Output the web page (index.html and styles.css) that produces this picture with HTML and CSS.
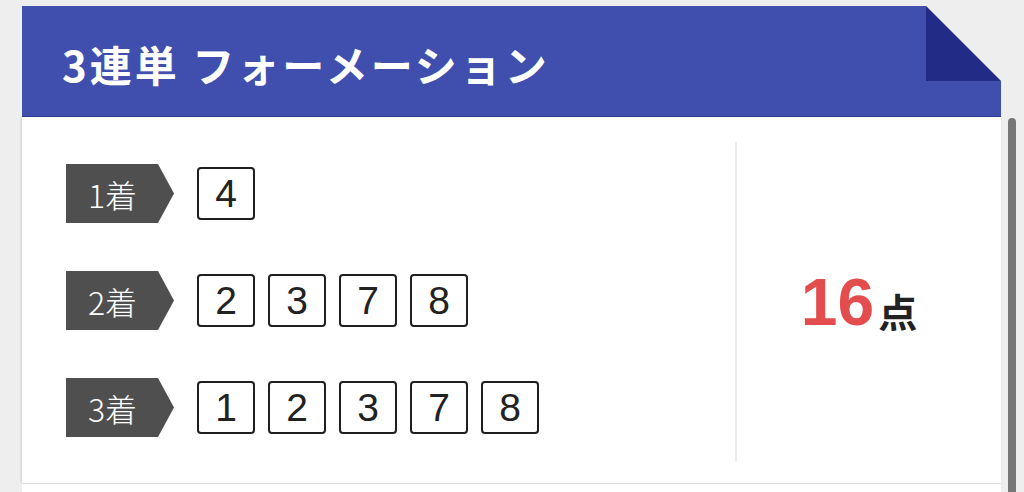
FILE: index.html
```html
<!DOCTYPE html>
<html lang="ja">
<head>
  <meta charset="UTF-8">
  <meta name="viewport" content="width=device-width, initial-scale=1.0">
  <title>3連単 フォーメーション</title>
  <link rel="stylesheet" href="styles.css">
</head>
<body>

<div class="card">
  <div class="card-head">
    <h2>3連単 フォーメーション</h2>
    <span class="fold"></span>
  </div>

  <div class="card-body">
    <div class="picks">
      <div class="pick-row">
        <span class="place">1着</span>
        <ul class="nums">
          <li>4</li>
        </ul>
      </div>
      <div class="pick-row">
        <span class="place">2着</span>
        <ul class="nums">
          <li>2</li><li>3</li><li>7</li><li>8</li>
        </ul>
      </div>
      <div class="pick-row">
        <span class="place">3着</span>
        <ul class="nums">
          <li>1</li><li>2</li><li>3</li><li>7</li><li>8</li>
        </ul>
      </div>
    </div>

    <div class="total">
      <span class="count">16</span><span class="unit">点</span>
    </div>
  </div>

  <div class="card-foot"></div>
</div>

<div class="scrollbar"></div>

</body>
</html>
```

FILE: styles.css
```css
body {
    margin: 0;
    padding: 6px 0 0 22px;
    background-color: #eeeeee;
    font-family: 'Noto Sans CJK JP', 'Noto Sans', sans-serif;
    color: #222;
    overflow: hidden;
}
.card {
    width: 979px;
}

/* header with the folded top-right corner */
.card-head {
    position: relative;
    height: 111px;
    display: flex;
    align-items: center;
    padding: 4px 0 0 40px;
    box-sizing: border-box;
    background-color: #404fae;
    border-bottom: 1px solid #2b3894;
    clip-path: polygon(0 0, calc(100% - 75px) 0, 100% 75px, 100% 100%, 0 100%);
}
.card-head h2 {
    margin: 0;
    color: #fff;
    font-size: 42px;
    font-weight: 700;
    letter-spacing: 3px;
}
.fold {
    position: absolute;
    top: 0;
    right: 0;
    width: 75px;
    height: 75px;
    background-color: #222c86;
    clip-path: polygon(0 0, 0 100%, 100% 100%);
}

.card-body {
    display: flex;
    background-color: #fff;
    box-shadow: -1px 0 2px rgba(0, 0, 0, 0.12);
}
.picks {
    width: 713px;
    box-sizing: border-box;
    padding: 47px 0 46px 44px;
    display: flex;
    flex-direction: column;
    gap: 48px;
}
.pick-row {
    display: flex;
    align-items: center;
    gap: 23px;
}
.place {
    width: 108px;
    height: 59px;
    box-sizing: border-box;
    padding-left: 22px;
    display: flex;
    align-items: center;
    background-color: #4f4f4f;
    color: #fff;
    font-size: 32px;
    font-weight: 300;
    clip-path: polygon(0 0, calc(100% - 16px) 0, 100% 50%, calc(100% - 16px) 100%, 0 100%);
}
.nums {
    list-style: none;
    margin: 0;
    padding: 0;
    display: flex;
    gap: 13px;
}
.nums li {
    width: 58px;
    height: 53px;
    box-sizing: border-box;
    border: 2px solid #1f1f1f;
    border-radius: 4px;
    display: flex;
    align-items: center;
    justify-content: center;
    font-family: 'Liberation Sans', Arial, sans-serif;
    font-size: 39px;
    line-height: 1;
    color: #222;
}

.total {
    flex: 1;
    margin: 25px 0 22px;
    border-left: 2px solid #ececec;
    display: flex;
    align-items: center;
    justify-content: center;
    padding-right: 20px;
}
.count {
    color: #e44d4d;
    font-family: 'Liberation Sans', Arial, sans-serif;
    font-size: 66px;
    font-weight: 700;
    line-height: 1;
}
.unit {
    font-size: 39px;
    font-weight: 700;
    margin-top: 16px;
    margin-left: 4px;
}

.card-foot {
    height: 10px;
    background-color: #fff;
    border-top: 1px solid #dedede;
}

.scrollbar {
    position: fixed;
    top: 118px;
    left: 1008px;
    width: 8px;
    height: 420px;
    border-radius: 4px;
    background-color: #777;
}
```
